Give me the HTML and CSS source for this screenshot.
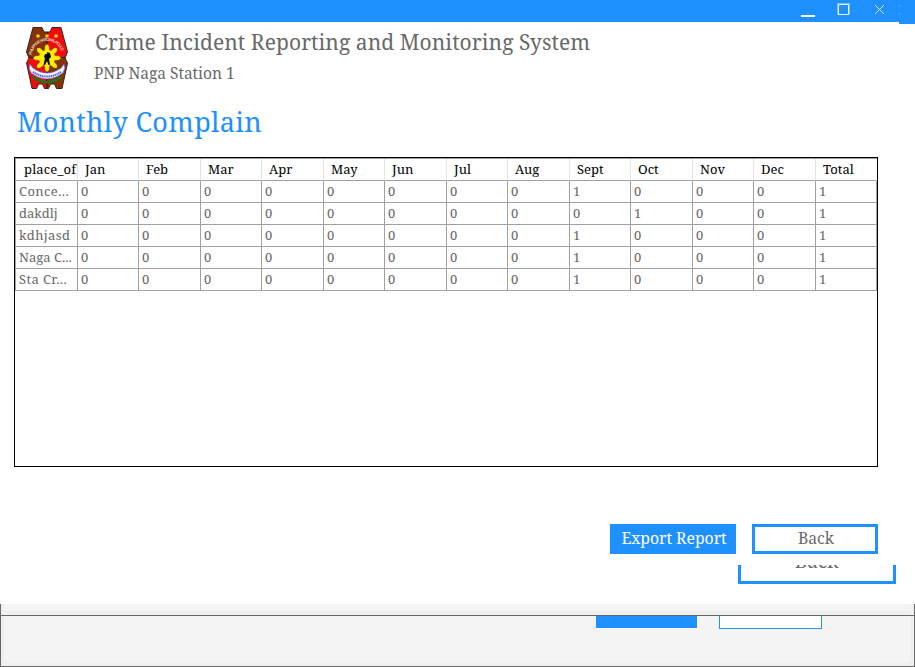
FILE: index.html
```html
<!DOCTYPE html>
<html lang="en">
<head>
<meta charset="utf-8">
<title>Crime Incident Reporting and Monitoring System</title>
<link rel="stylesheet" href="styles.css">
</head>
<body>
<div class="titlebar">
  <svg class="controls" width="135" height="24" viewBox="0 0 135 24">
    <path fill="#1e90ff" d="M119 22h16v2h-16z"/>
    <path fill="#fff" d="M21 15h14v2H21z"/>
    <path fill="none" stroke="#7dbfff" d="M57.500 3.500h12v11h-12z"/>
    <path fill="none" stroke="#e2f1ff" d="M58.500 4.500h10v10h-10z"/>
    <path fill="none" stroke="#d5eaff" d="M95 5l9 9m0-9l-9 9"/>
    <path fill="#8ec7ff" d="M119 5h1v1h-1zM119 13h1v1h-1z"/>
  </svg>
</div>
<main class="page">
  <header class="header">
    <svg class="badge" width="42" height="62" viewBox="0 0 42 62">
      <defs>
        <clipPath id="shield"><path d="M7 .5H16L18 5h6l2-4.500h9L41.500 25 39 31l2.500 5L36 61.500H30.500L28.500 57h-4L22.500 61.500h-4L16.500 57h-4L10.500 61.500H6L.5 36 3 31 .5 25z"/></clipPath>
        <path id="arc" d="M5.500 28C9 9 33 9 36.500 28"/>
      </defs>
      <g clip-path="url(#shield)">
        <path fill="#873108" d="M0 0h21v31H0zM21 31h21v31H21z"/>
        <path fill="#f00c0c" d="M21 0h21v31H21zM0 31h21v31H0z"/>
        <path stroke="#25130a" d="M21 5v57M0 30.500h42"/>
        <path fill="none" stroke="#2f6b1c" stroke-width="3" d="M7 50Q21 60 35 50"/>
      </g>
      <path fill="none" stroke="#3b211b" d="M7 .5H16L18 5h6l2-4.500h9L41.500 25 39 31l2.500 5L36 61.500H30.500L28.500 57h-4L22.500 61.500h-4L16.500 57h-4L10.500 61.500H6L.5 36 3 31 .5 25z"/>
      <g fill="#ffed00" stroke="#7d7600" stroke-width=".4">
        <path d="M19 19l2-2 2 2 1 12-1 12-2 2-2-2-1-12z"/>
        <path d="M9 29l12-1 12 1 2 2-2 2-12 1-12-1-2-2z"/>
        <path d="M11 21l3 0 9 8 8 9 0 3-3 0-9-8-8-9z"/>
        <path d="M31 21l-3 0-9 8-8 9 0 3 3 0 9-8 8-9z"/>
      </g>
      <circle cx="21" cy="31" r="8" fill="#ffed00"/>
      <path fill="#090909" d="M21 25l3 1 1 4-2 2 1 6h-1.500l-1.500-4-2 4h-1.500l1.500-7-1-1 1-3 2 0z"/>
      <g fill="#ffd51a"><circle cx="12" cy="9" r="1.800"/><circle cx="21" cy="9" r="1.800"/><circle cx="30" cy="9" r="1.800"/></g>
      <text class="seal-name"><textPath href="#arc" textLength="42">PHILIPPINE NATIONAL POLICE</textPath></text>
      <path fill="#eef0ff" stroke="#5557cf" stroke-width=".7" d="M4 37l3 4Q21 51 35 41l3-4 1 4-2 5Q21 58 5 46l-2-5z"/>
      <path fill="none" stroke="#4448cf" stroke-width="1.800" stroke-dasharray="1.200 .7" d="M7 45Q21 54 35 45"/>
    </svg>
    <div class="heading">
      <h1 class="system">Crime Incident Reporting and Monitoring System</h1>
      <p class="station">PNP Naga Station 1</p>
    </div>
  </header>
  <h2 class="title">Monthly Complain</h2>
  <section class="panel">
    <table class="grid">
      <colgroup><col class="w"><col class="n"><col class="w"><col class="n"><col class="w"><col class="n"><col class="w"><col class="n"><col class="w"><col class="n"><col class="w"><col class="n"><col class="w"><col class="n"></colgroup>
      <thead><tr><th>place_of</th><th>Jan</th><th>Feb</th><th>Mar</th><th>Apr</th><th>May</th><th>Jun</th><th>Jul</th><th>Aug</th><th>Sept</th><th>Oct</th><th>Nov</th><th>Dec</th><th>Total</th></tr></thead>
      <tbody>
        <tr><td class="wide">Conce...</td><td>0</td><td>0</td><td>0</td><td>0</td><td>0</td><td>0</td><td>0</td><td>0</td><td>1</td><td>0</td><td>0</td><td>0</td><td>1</td></tr>
        <tr><td>dakdlj</td><td>0</td><td>0</td><td>0</td><td>0</td><td>0</td><td>0</td><td>0</td><td>0</td><td>0</td><td>1</td><td>0</td><td>0</td><td>1</td></tr>
        <tr><td class="wide">kdhjasd</td><td>0</td><td>0</td><td>0</td><td>0</td><td>0</td><td>0</td><td>0</td><td>0</td><td>1</td><td>0</td><td>0</td><td>0</td><td>1</td></tr>
        <tr><td>Naga C...</td><td>0</td><td>0</td><td>0</td><td>0</td><td>0</td><td>0</td><td>0</td><td>0</td><td>1</td><td>0</td><td>0</td><td>0</td><td>1</td></tr>
        <tr><td class="wide">Sta Cr...</td><td>0</td><td>0</td><td>0</td><td>0</td><td>0</td><td>0</td><td>0</td><td>0</td><td>1</td><td>0</td><td>0</td><td>0</td><td>1</td></tr>
      </tbody>
    </table>
  </section>
  <div class="actions">
    <button class="btn primary">Export Report</button>
    <button class="btn outline">Back</button>
  </div>
  <div class="cut-button"><span>Back</span></div>
</main>
<div class="frame upper"></div>
<div class="frame lower"><i class="stub solid"></i><i class="stub hollow"></i></div>
</body>
</html>
```

FILE: styles.css
```css
* { box-sizing: border-box; }
body {
  margin: 0;
  width: 915px;
  height: 667px;
  overflow: hidden;
  background: #fff;
  color: #696969;
  font-family: "Noto Serif", "Droid Serif", "DejaVu Serif Condensed", "DejaVu Serif", serif;
}
h1, h2, p { margin: 0; font-weight: 400; white-space: nowrap; }
.titlebar { display: flex; justify-content: flex-end; height: 22px; background: #1e90ff; }
.controls { flex: none; }
.page { display: flex; flex-direction: column; height: 582px; }
.header { display: flex; height: 78px; padding: 5px 0 0 26px; }
.badge { flex: none; }
.seal-name { font: 4px "Liberation Sans", sans-serif; fill: #fff; }
.heading { padding-left: 27px; }
.system { font-size: 21px; line-height: 30px; letter-spacing: .065px; }
.station { font-size: 15.5px; line-height: 22px; margin: 5px 0 0 -1px; letter-spacing: -.02px; }
.title { height: 57px; padding-left: 17px; color: #1e90ff; font-size: 27px; line-height: 44px; letter-spacing: .35px; }
.panel { flex: none; width: 864px; height: 310px; margin-left: 14px; border: 1px solid #000; }
.grid { width: 862px; table-layout: fixed; border-collapse: separate; border-spacing: 0; border-top: 1px solid #a0a0a0; border-left: 1px solid #a0a0a0; font-size: 13px; }
.w { width: 62px; }
.n { width: 61px; }
.grid th, .grid td { height: 22px; padding: 0 0 0 3px; border-right: 1px solid #a0a0a0; border-bottom: 1px solid #a0a0a0; text-align: left; font-weight: 400; line-height: 21px; white-space: nowrap; overflow: hidden; }
.grid th { padding-left: 7px; color: #000; border-right-color: #e5e5e5; }
.grid th:first-child { padding-left: 8px; letter-spacing: .15px; }
.grid th:last-child { border-right-color: #fff; }
.grid .wide { letter-spacing: .4px; }
.actions { display: flex; gap: 16px; margin: 57px 0 0 610px; }
.btn { width: 126px; height: 30px; padding: 0 0 2px 2px; border: 3px solid #1e90ff; font: 15.75px/22px "Noto Serif", "Droid Serif", "DejaVu Serif Condensed", "DejaVu Serif", serif; white-space: nowrap; }
.primary { background: #1e90ff; color: #fff; }
.outline { background: #fff; color: #696969; }
.cut-button { flex: none; width: 158px; height: 19px; margin: 11px 0 0 738px; padding-right: 1px; border: solid #1e90ff; border-width: 0 3px 3px; overflow: hidden; text-align: center; font-size: 19px; line-height: 20px; }
.cut-button span { display: block; margin-top: -14px; }
.frame { border: solid #696969; border-width: 0 1px 1px; background: #f4f4f4; box-shadow: inset 3px 0 #efefef, inset -3px 0 #efefef, inset 0 -4px #efefef; }
.upper { height: 12px; }
.lower { display: flex; gap: 22px; height: 51px; padding-left: 595px; }
.stub { display: block; }
.solid { width: 101px; height: 12px; background: #1e90ff; box-shadow: 1px 1px #fff; }
.hollow { width: 103px; height: 13px; border: solid #1e90ff; border-width: 0 1px 1px; background: #fff; }
```
